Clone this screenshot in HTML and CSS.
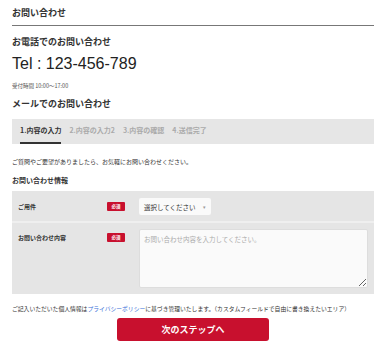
FILE: index.html
```html
<!DOCTYPE html>
<html lang="ja">
<head>
    <meta charset="UTF-8">
    <meta name="viewport" content="width=device-width, initial-scale=1.0">
    <title>お問い合わせ</title>
    <link rel="stylesheet" href="styles.css">
</head>
<body>
    <div class="page">
        <h1 class="page-title">お問い合わせ</h1>

        <h2 class="sub-title">お電話でのお問い合わせ</h2>
        <p class="tel">Tel : 123-456-789</p>
        <p class="hours">受付時間 10:00〜17:00</p>

        <h2 class="sub-title mail-title">メールでのお問い合わせ</h2>

        <ul class="steps">
            <li class="step active">1.内容の入力</li>
            <li class="step">2.内容の入力2</li>
            <li class="step">3.内容の確認</li>
            <li class="step">4.送信完了</li>
        </ul>

        <p class="lead">ご質問やご要望がありましたら、お気軽にお問い合わせください。</p>

        <h3 class="form-title">お問い合わせ情報</h3>

        <div class="form-table">
            <div class="form-row">
                <label class="form-label">ご用件</label>
                <span class="badge">必須</span>
                <div class="select">
                    <span>選択してください</span>
                    <span class="caret">▾</span>
                </div>
            </div>
            <div class="form-row form-row-top">
                <label class="form-label">お問い合わせ内容</label>
                <span class="badge">必須</span>
                <textarea class="textarea" placeholder="お問い合わせ内容を入力してください。"></textarea>
            </div>
        </div>

        <p class="privacy">ご記入いただいた個人情報は<a href="#">プライバシーポリシー</a>に基づき管理いたします。（カスタムフィールドで自由に書き換えたいエリア）</p>

        <div class="actions">
            <button class="btn-next" type="button">次のステップへ</button>
        </div>
    </div>
</body>
</html>
```

FILE: styles.css
```css
body {
    margin: 0;
    background: #fff;
    color: #333;
    font-family: "Noto Sans CJK JP", "Liberation Sans", sans-serif;
}
.page {
    padding: 0 6px 0 12px;
}
.page-title {
    margin: 0;
    padding: 7px 0 6px;
    font-size: 9px;
    line-height: 12px;
    font-weight: bold;
    border-bottom: 1px solid #777;
}
.sub-title {
    margin: 0;
    padding-top: 10px;
    font-size: 9px;
    line-height: 12px;
    font-weight: bold;
}
.tel {
    margin: 0;
    padding-top: 6px;
    font-family: "Liberation Sans", Arial, sans-serif;
    font-size: 16px;
    line-height: 20px;
    color: #222;
}
.hours {
    margin: 0;
    padding-top: 8px;
    font-size: 5.5px;
    line-height: 8px;
    color: #555;
}
.mail-title {
    padding-top: 8px;
}
.steps {
    list-style: none;
    margin: 9px 0 0;
    padding: 0 0 0 8px;
    height: 25px;
    display: flex;
    gap: 8px;
    background: #e6e6e6;
}
.step {
    font-size: 7px;
    font-weight: bold;
    color: #aaa;
    line-height: 23px;
    border-bottom: 2px solid transparent;
}
.step.active {
    color: #333;
    border-bottom-color: #333;
}
.lead {
    margin: 0;
    padding-top: 13px;
    font-size: 6px;
    line-height: 9px;
}
.form-title {
    margin: 0;
    padding-top: 9px;
    font-size: 7px;
    line-height: 10px;
    font-weight: bold;
}
.form-table {
    margin-top: 6px;
    background: #e5e5e5;
}
.form-row {
    display: grid;
    grid-template-columns: 89px 32px 1fr;
    align-items: center;
    padding: 7px 6px 6px;
}
.form-row + .form-row {
    border-top: 2px solid #efefef;
    padding-top: 6px;
}
.form-row-top {
    align-items: start;
}
.form-row-top .form-label,
.form-row-top .badge {
    margin-top: 4px;
}
.form-label {
    font-size: 6px;
    font-weight: bold;
    line-height: 9px;
}
.badge {
    width: 18px;
    height: 9px;
    background: #c8102e;
    color: #fff;
    font-size: 4.5px;
    font-weight: bold;
    line-height: 9px;
    text-align: center;
    border-radius: 1px;
}
.select {
    width: 72px;
    height: 17px;
    box-sizing: border-box;
    padding: 0 5px;
    display: flex;
    align-items: center;
    justify-content: space-between;
    background: #fafafa;
    border-radius: 2px;
    font-size: 6.5px;
    color: #333;
}
.caret {
    font-size: 5px;
    color: #999;
}
.textarea {
    display: block;
    width: 100%;
    height: 59px;
    box-sizing: border-box;
    margin: 0;
    padding: 4px 4px;
    background: #fafafa;
    border: 1px solid #ddd;
    border-radius: 2px;
    font-family: "Noto Sans CJK JP", sans-serif;
    font-size: 6.5px;
}
.textarea::placeholder {
    color: #aaa;
}
.privacy {
    margin: 0;
    padding-top: 10px;
    font-size: 5.8px;
    line-height: 9px;
    white-space: nowrap;
}
.privacy a {
    color: #3a6fd8;
    text-decoration: none;
}
.actions {
    padding-top: 5px;
    display: flex;
    justify-content: center;
}
.btn-next {
    width: 152px;
    height: 23px;
    border: 0;
    border-radius: 3px;
    background: #c8102e;
    color: #fff;
    font-family: "Noto Sans CJK JP", sans-serif;
    font-size: 9px;
    font-weight: bold;
}
```
